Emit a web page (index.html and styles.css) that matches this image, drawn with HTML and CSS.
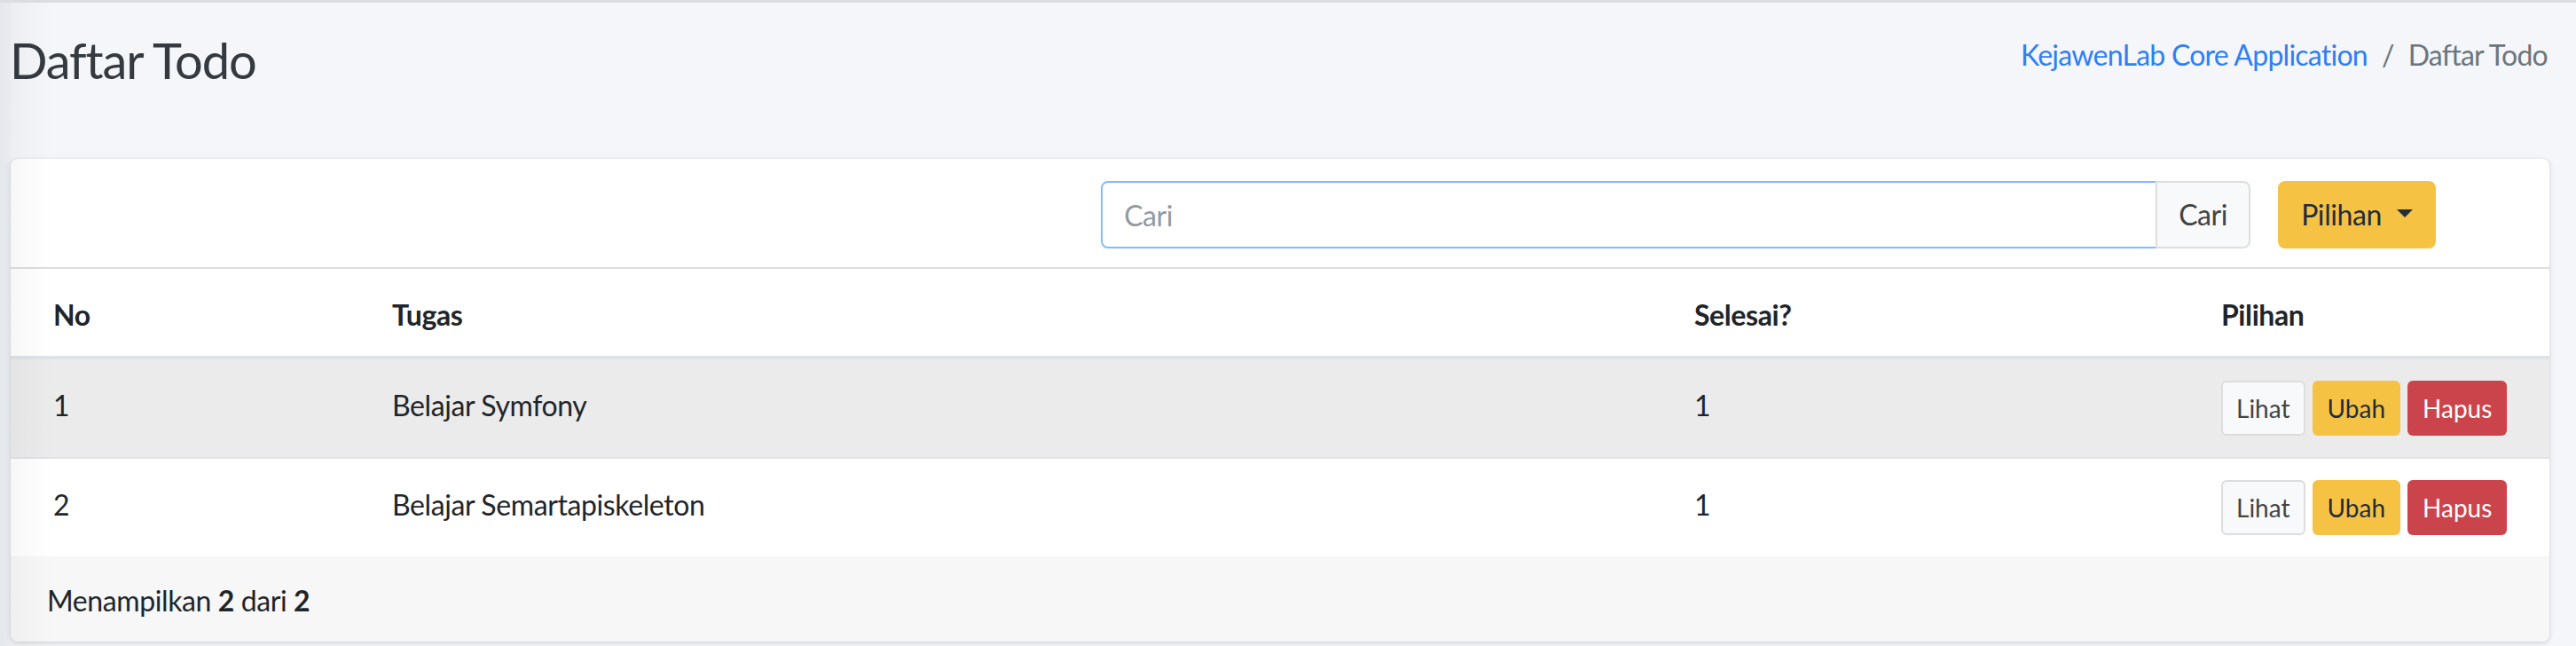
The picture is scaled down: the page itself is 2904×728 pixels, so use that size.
FILE: index.html
```html
<!DOCTYPE html>
<html lang="id">
<head>
<meta charset="utf-8">
<title>Daftar Todo</title>
<link rel="stylesheet" href="styles.css">
</head>
<body>
<div class="page">
  <div class="sidebar-shadow"></div>
  <header class="content-header">
    <h1 class="page-title">Daftar Todo</h1>
    <ol class="breadcrumb">
      <li class="crumb"><a href="#">KejawenLab Core Application</a></li>
      <li class="crumb crumb-active">Daftar Todo</li>
    </ol>
  </header>
  <section class="card">
    <div class="card-header">
      <form class="search-group">
        <input class="search-input" type="text" placeholder="Cari">
        <button class="btn btn-light btn-search" type="button">Cari</button>
      </form>
      <button class="btn btn-warning btn-dropdown" type="button">Pilihan<span class="caret"></span></button>
    </div>
    <table class="table">
      <colgroup>
        <col class="col-no">
        <col class="col-task">
        <col class="col-done">
        <col class="col-actions">
      </colgroup>
      <thead>
        <tr>
          <th class="cell-first">No</th>
          <th>Tugas</th>
          <th>Selesai?</th>
          <th>Pilihan</th>
        </tr>
      </thead>
      <tbody>
        <tr class="row-striped">
          <td class="cell-first">1</td>
          <td>Belajar Symfony</td>
          <td>1</td>
          <td class="cell-actions">
            <div class="action-group">
              <button class="btn-sm btn-light" type="button">Lihat</button>
              <button class="btn-sm btn-warning" type="button">Ubah</button>
              <button class="btn-sm btn-danger" type="button">Hapus</button>
            </div>
          </td>
        </tr>
        <tr class="row-plain">
          <td class="cell-first">2</td>
          <td>Belajar Semartapiskeleton</td>
          <td>1</td>
          <td class="cell-actions">
            <div class="action-group">
              <button class="btn-sm btn-light" type="button">Lihat</button>
              <button class="btn-sm btn-warning" type="button">Ubah</button>
              <button class="btn-sm btn-danger" type="button">Hapus</button>
            </div>
          </td>
        </tr>
      </tbody>
    </table>
    <footer class="card-footer">Menampilkan <b>2</b> dari <b>2</b></footer>
  </section>
</div>
</body>
</html>
```
FILE: styles.css
```css
* {
  box-sizing: border-box;
}

html,
body {
  margin: 0;
  padding: 0;
}

body {
  background: #f4f6f9;
  font-family: Lato, "Open Sans", "Liberation Sans", sans-serif;
  font-size: 32px;
  line-height: 48px;
  letter-spacing: -0.4px;
  color: #212529;
}

.page {
  position: relative;
  min-height: 728px;
  border-top: 3px solid #dcdde0;
  padding-bottom: 4px;
}

.sidebar-shadow {
  position: absolute;
  left: 0;
  top: 0;
  bottom: 0;
  width: 60px;
  background: linear-gradient(to right,
    rgba(20, 30, 60, 0.065) 0,
    rgba(20, 30, 60, 0.055) 10px,
    rgba(0, 0, 0, 0.03) 12px,
    rgba(0, 0, 0, 0) 60px);
  pointer-events: none;
  z-index: 2;
}

.content-header {
  display: flex;
  justify-content: space-between;
  align-items: flex-start;
  padding: 30px 32px 0 11px;
  height: 176px;
}

.page-title {
  margin: 0;
  font-size: 56px;
  line-height: 69px;
  font-weight: 400;
  letter-spacing: -1.1px;
  color: #343a40;
}

.breadcrumb {
  display: flex;
  list-style: none;
  margin: 0;
  padding: 5px 0 0;
  font-size: 32px;
  line-height: 48px;
  letter-spacing: -0.75px;
}

.crumb a {
  color: #2f7ff5;
  text-decoration: none;
}

.crumb + .crumb {
  padding-left: 16px;
}

.crumb + .crumb::before {
  content: "/";
  padding-right: 16px;
  color: #6c757d;
}

.crumb-active {
  color: #6c757d;
}

.card {
  position: relative;
  margin: 0 30px 0 12px;
  background: #fff;
  border-radius: 8px;
  box-shadow: 0 0 2px rgba(0, 0, 0, 0.125), 0 2px 6px rgba(0, 0, 0, 0.12);
  overflow: hidden;
}

.card-header {
  display: flex;
  justify-content: flex-end;
  align-items: center;
  gap: 31px;
  padding: 25px 128px 21px 0;
  border-bottom: 2px solid #dedede;
}

.search-group {
  display: flex;
  width: 1296px;
  margin: 0;
}

.search-input {
  flex: 1;
  height: 76px;
  padding: 0 24px;
  border: 2px solid #80bdff;
  border-radius: 8px 0 0 8px;
  font-family: inherit;
  font-size: 32px;
  letter-spacing: -0.4px;
  color: #495057;
  background: #fff;
  outline: none;
}

.search-input::placeholder {
  color: #939ba2;
}

.btn {
  height: 76px;
  padding: 0 24px;
  font-family: inherit;
  font-size: 32px;
  line-height: 48px;
  letter-spacing: -0.4px;
  border-radius: 8px;
  border: 2px solid transparent;
  cursor: pointer;
  display: inline-flex;
  align-items: center;
}

.btn-search {
  margin-left: -2px;
  border-radius: 0 8px 8px 0;
  border-color: #dddddd;
  color: #444;
}

.btn-light {
  background: #f8f9fa;
  border-color: #dddddd;
  color: #444;
}

.btn-warning {
  background: #f6c243;
  border-color: #f6c243;
  color: #1f2d3d;
}

.btn-danger {
  background: #cc444b;
  border-color: #cc444b;
  color: #fff;
}

.caret {
  display: inline-block;
  margin-left: 17px;
  width: 0;
  height: 0;
  border-top: 9px solid #1f2d3d;
  border-left: 9px solid transparent;
  border-right: 9px solid transparent;
  position: relative;
  top: -2px;
}

.table {
  width: 100%;
  border-collapse: collapse;
  table-layout: fixed;
}

.col-no {
  width: 406px;
}

.col-task {
  width: 1468px;
}

.col-done {
  width: 594px;
}

.table th,
.table td {
  text-align: left;
  vertical-align: top;
  padding: 28px 24px 20px;
}

.table th {
  padding-top: 28px;
  padding-bottom: 22px;
  font-weight: 700;
  border-bottom: 4px solid #dfe2e6;
}

.table .cell-first {
  padding-left: 48px;
}

.table td {
  height: 110px;
}

.table td.cell-actions {
  padding-top: 24px;
  padding-bottom: 24px;
}

.row-striped {
  background: #ebebeb;
}

.row-plain td {
  border-top: 2px solid #dfe2e6;
}

.action-group {
  display: flex;
  gap: 8px;
}

.btn-sm {
  flex: none;
  height: 62px;
  padding: 0 15px;
  font-family: inherit;
  font-size: 28px;
  line-height: 42px;
  letter-spacing: 0;
  border-radius: 6px;
  border: 2px solid transparent;
  cursor: pointer;
}

.btn-sm.btn-light {
  border-color: #dddddd;
}

.card-footer {
  background: #f7f7f7;
  padding: 26px 41px 22px;
  line-height: 48px;
  border-radius: 0 0 8px 8px;
}
```
